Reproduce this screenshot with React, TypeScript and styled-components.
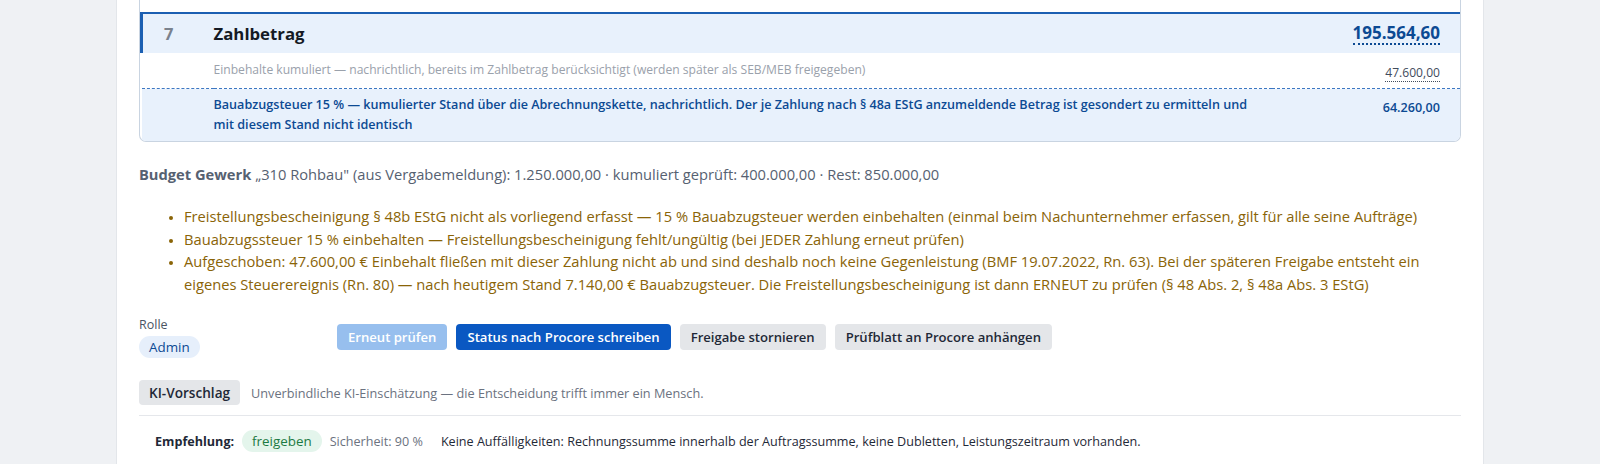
import React from "react";
import styled, { createGlobalStyle } from "styled-components";

const GlobalStyle = createGlobalStyle`
  html, body {
    margin: 0;
    padding: 0;
    background: #eff1f4;
    font-family: "Open Sans", "Noto Sans", sans-serif;
    color: #1f2937;
  }
`;

const Page = styled.div`
  padding: 0 116px;
`;

const Card = styled.div`
  background: #fff;
  border-left: 1px solid #e3e6ea;
  border-right: 1px solid #e3e6ea;
  padding: 0 22px 20px;
`;

/* the rows above the total are scrolled out of view; only a strip remains */
const TableBox = styled.div`
  padding-top: 12px;
  border: 1px solid #c9d4e1;
  border-top: none;
  border-radius: 0 0 7px 7px;
  overflow: hidden;
`;

const Table = styled.table`
  width: 100%;
  border-collapse: collapse;
`;

type Kind = "total" | "note" | "tax";

const Row = styled.tr<{ $variant: Kind }>`
  background: ${(p) => (p.$variant === "note" ? "#fff" : "#e8f1fc")};
  border-top: ${(p) =>
    p.$variant === "total"
      ? "2px solid #1b5fb2"
      : p.$variant === "tax"
      ? "1px dashed #3d77c2"
      : "none"};
`;

const NumCell = styled.td<{ $accent?: boolean }>`
  width: 48px;
  padding: 0 0 0 ${(p) => (p.$accent ? "21px" : "24px")};
  border-left: ${(p) => (p.$accent ? "3px solid #1b5fb2" : "none")};
  font-size: 16.5px;
  font-weight: 700;
  color: #7a828e;
  vertical-align: middle;
`;

const LabelCell = styled.td<{ $kind: Kind }>`
  padding: ${(p) =>
    p.$kind === "total" ? "9px 12px 8px 0" : p.$kind === "tax" ? "6px 12px 6px 0" : "8px 12px 9px 0"};
  font-size: ${(p) =>
    p.$kind === "total" ? "16.8px" : p.$kind === "tax" ? "12.6px" : "12.1px"};
  font-weight: ${(p) => (p.$kind === "total" ? 700 : p.$kind === "tax" ? 600 : 400)};
  line-height: ${(p) => (p.$kind === "total" ? "22px" : p.$kind === "tax" ? "20px" : "18px")};
  color: ${(p) =>
    p.$kind === "total" ? "#141a24" : p.$kind === "tax" ? "#0c4a93" : "#9aa1ab"};
`;

const AmountCell = styled.td<{ $kind: Kind }>`
  width: 168px;
  padding: ${(p) => (p.$kind === "tax" ? "6px 20px 0 0" : "0 20px 0 0")};
  text-align: right;
  vertical-align: ${(p) => (p.$kind === "tax" ? "top" : "middle")};
`;

const Amount = styled.span<{ $kind: Kind }>`
  display: inline-block;
  font-size: ${(p) => (p.$kind === "total" ? "17px" : p.$kind === "tax" ? "12.6px" : "12.1px")};
  font-weight: ${(p) => (p.$kind === "total" ? 700 : p.$kind === "tax" ? 600 : 400)};
  line-height: ${(p) => (p.$kind === "total" ? "21px" : p.$kind === "tax" ? "20px" : "17px")};
  color: ${(p) => (p.$kind === "note" ? "#3f4b5c" : "#0c4a93")};
  border-bottom: ${(p) =>
    p.$kind === "total"
      ? "2px dotted #0c4a93"
      : p.$kind === "note"
      ? "1.5px dotted #3f4b5c"
      : "none"};
`;

const Budget = styled.p`
  margin: 22px 0 0;
  font-size: 14.7px;
  line-height: 20px;
  color: #566171;

  b {
    font-weight: 700;
  }
`;

const Notes = styled.ul`
  margin: 21px 0 0;
  padding: 0 0 0 45px;
  font-size: 14.7px;
  line-height: 22.5px;
  color: #8a6407;

  li::marker {
    font-size: 12px;
  }
`;

const ActionBar = styled.div`
  display: flex;
  align-items: center;
  margin-top: 22px;
`;

const RoleBox = styled.div`
  width: 198px;
  display: flex;
  flex-direction: column;
  align-items: flex-start;
  gap: 3px;
`;

const RoleLabel = styled.span`
  font-size: 12.5px;
  line-height: 16px;
  color: #4b5563;
`;

const Pill = styled.span<{ $tone: "blue" | "green" }>`
  display: inline-block;
  padding: 2px 10px;
  border-radius: 12px;
  font-size: 13.4px;
  line-height: 18px;
  background: ${(p) => (p.$tone === "blue" ? "#e6effb" : "#e4f5ec")};
  color: ${(p) => (p.$tone === "blue" ? "#0c4a93" : "#1c7a43")};
`;

const Buttons = styled.div`
  display: flex;
  gap: 9px;
  margin-top: -2px;
`;

const Button = styled.button<{ $variant: "primary" | "disabled" | "secondary" }>`
  font-family: inherit;
  font-size: 13.1px;
  font-weight: 600;
  line-height: 16px;
  padding: 5px 11px;
  border: none;
  border-radius: 4px;
  background: ${(p) =>
    p.$variant === "primary" ? "#0a58c2" : p.$variant === "disabled" ? "#97bfee" : "#e4e6e9"};
  color: ${(p) => (p.$variant === "secondary" ? "#1f2937" : "#fff")};
`;

const KiRow = styled.div`
  display: flex;
  align-items: center;
  gap: 11px;
  margin-top: 22px;
  padding-bottom: 10px;
  border-bottom: 1px solid #e5e7eb;
`;

const Tag = styled.span`
  padding: 4px 10px;
  border-radius: 4px;
  background: #e4e6e9;
  font-size: 13.6px;
  font-weight: 600;
  line-height: 17px;
  color: #1f2937;
`;

const Hint = styled.span`
  font-size: 12.7px;
  color: #6b7280;
`;

const Recommendation = styled.div`
  display: flex;
  align-items: center;
  gap: 8px;
  padding: 14px 16px 0;
  font-size: 12.6px;
`;

const RecLabel = styled.b`
  font-weight: 700;
  color: #1f2937;
`;

const Confidence = styled.span`
  color: #6b7280;
  margin-right: 10px;
`;

const RecText = styled.span`
  color: #1f2937;
`;

interface Line {
  nr?: string;
  label: string;
  amount: string;
  kind: Kind;
}

const lines: Line[] = [
  { nr: "7", label: "Zahlbetrag", amount: "195.564,60", kind: "total" },
  {
    label:
      "Einbehalte kumuliert — nachrichtlich, bereits im Zahlbetrag berücksichtigt (werden später als SEB/MEB freigegeben)",
    amount: "47.600,00",
    kind: "note",
  },
  {
    label:
      "Bauabzugsteuer 15 % — kumulierter Stand über die Abrechnungskette, nachrichtlich. Der je Zahlung nach § 48a EStG anzumeldende Betrag ist gesondert zu ermitteln und mit diesem Stand nicht identisch",
    amount: "64.260,00",
    kind: "tax",
  },
];

const notes = [
  "Freistellungsbescheinigung § 48b EStG nicht als vorliegend erfasst — 15 % Bauabzugsteuer werden einbehalten (einmal beim Nachunternehmer erfassen, gilt für alle seine Aufträge)",
  "Bauabzugssteuer 15 % einbehalten — Freistellungsbescheinigung fehlt/ungültig (bei JEDER Zahlung erneut prüfen)",
  "Aufgeschoben: 47.600,00 € Einbehalt fließen mit dieser Zahlung nicht ab und sind deshalb noch keine Gegenleistung (BMF 19.07.2022, Rn. 63). Bei der späteren Freigabe entsteht ein eigenes Steuerereignis (Rn. 80) — nach heutigem Stand 7.140,00 € Bauabzugsteuer. Die Freistellungsbescheinigung ist dann ERNEUT zu prüfen (§ 48 Abs. 2, § 48a Abs. 3 EStG)",
];

const App: React.FC = () => (
  <>
    <GlobalStyle />
    <Page>
      <Card>
        <TableBox>
          <Table>
            <tbody>
              {lines.map((line, idx) => (
                <Row key={idx} $variant={line.kind}>
                  <NumCell $accent={line.kind === "total"}>{line.nr}</NumCell>
                  <LabelCell $kind={line.kind}>{line.label}</LabelCell>
                  <AmountCell $kind={line.kind}>
                    <Amount $kind={line.kind}>{line.amount}</Amount>
                  </AmountCell>
                </Row>
              ))}
            </tbody>
          </Table>
        </TableBox>

        <Budget>
          <b>Budget Gewerk</b> „310 Rohbau" (aus Vergabemeldung): 1.250.000,00 · kumuliert geprüft: 400.000,00 ·
          Rest: 850.000,00
        </Budget>

        <Notes>
          {notes.map((note, idx) => (
            <li key={idx}>{note}</li>
          ))}
        </Notes>

        <ActionBar>
          <RoleBox>
            <RoleLabel>Rolle</RoleLabel>
            <Pill $tone="blue">Admin</Pill>
          </RoleBox>
          <Buttons>
            <Button $variant="disabled">Erneut prüfen</Button>
            <Button $variant="primary">Status nach Procore schreiben</Button>
            <Button $variant="secondary">Freigabe stornieren</Button>
            <Button $variant="secondary">Prüfblatt an Procore anhängen</Button>
          </Buttons>
        </ActionBar>

        <KiRow>
          <Tag>KI-Vorschlag</Tag>
          <Hint>Unverbindliche KI-Einschätzung — die Entscheidung trifft immer ein Mensch.</Hint>
        </KiRow>

        <Recommendation>
          <RecLabel>Empfehlung:</RecLabel>
          <Pill $tone="green">freigeben</Pill>
          <Confidence>Sicherheit: 90 %</Confidence>
          <RecText>
            Keine Auffälligkeiten: Rechnungssumme innerhalb der Auftragssumme, keine Dubletten, Leistungszeitraum
            vorhanden.
          </RecText>
        </Recommendation>
      </Card>
    </Page>
  </>
);

export default App;
